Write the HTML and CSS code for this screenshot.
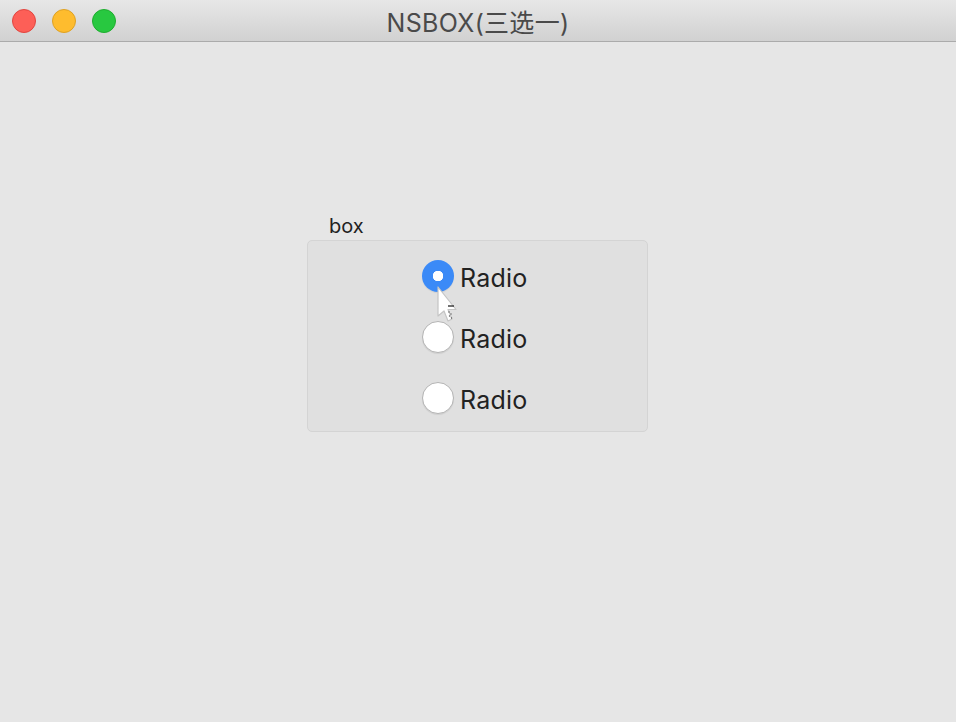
FILE: index.html
```html
<!DOCTYPE html>
<html>
<head>
<meta charset="utf-8">
<link rel="stylesheet" href="styles.css">
</head>
<body>
<div class="window">
  <div class="titlebar">
    <div class="lights">
      <span class="light red"></span>
      <span class="light yellow"></span>
      <span class="light green"></span>
    </div>
    <div class="title">NSBOX(三选一)</div>
  </div>
  <div class="content">
    <div class="group">
      <div class="group-label">box</div>
      <div class="box">
        <div class="radio-row">
          <span class="radio checked"></span><span class="radio-text">Radio</span>
          <svg class="cursor" width="24" height="40" viewBox="0 0 24 40">
            <path d="M1 1 L1 30 L7 25 L11 35 L15 33 L11 23.5 L19 23.5 Z" fill="#ffffff" stroke="#c4c4c4" stroke-width="1.2" stroke-linejoin="round"/>
            <path d="M11 20 L17 20" stroke="#222" stroke-width="1.3"/>
            <circle cx="12" cy="26" r="0.7" fill="#555"/>
            <circle cx="14" cy="28" r="0.7" fill="#555"/>
            <circle cx="12.5" cy="30" r="0.7" fill="#555"/>
            <circle cx="14.5" cy="32" r="0.7" fill="#555"/>
          </svg>
        </div>
        <div class="radio-row">
          <span class="radio"></span><span class="radio-text">Radio</span>
        </div>
        <div class="radio-row">
          <span class="radio"></span><span class="radio-text">Radio</span>
        </div>
      </div>
    </div>
  </div>
</div>
</body>
</html>
```
FILE: styles.css
```css
html, body {
  margin: 0;
  padding: 0;
}
body {
  width: 956px;
  height: 722px;
  overflow: hidden;
  background: #e6e6e6;
  font-family: Inter, "Noto Sans CJK SC", sans-serif;
}
.window {
  display: flex;
  flex-direction: column;
  width: 956px;
  height: 722px;
}
.titlebar {
  position: relative;
  height: 41px;
  flex: none;
  background: linear-gradient(#e7e7e7, #d1d1d1);
  border-bottom: 1px solid #ababab;
  display: flex;
  align-items: center;
  justify-content: center;
}
.lights {
  position: absolute;
  left: 12px;
  top: 9px;
  display: flex;
  gap: 16px;
}
.light {
  width: 24px;
  height: 24px;
  border-radius: 50%;
  box-sizing: border-box;
}
.red { background: #fd5f57; border: 1px solid #e1453f; }
.yellow { background: #febc2e; border: 1px solid #dea123; }
.green { background: #28c840; border: 1px solid #1ead2e; }
.title {
  font-size: 25px;
  color: #4a4a4a;
  letter-spacing: 0.3px;
  padding-top: 1px;
}
.content {
  flex: 1;
  background: #e6e6e6;
}
.group {
  margin-left: 307px;
  margin-top: 171px;
  width: 341px;
}
.group-label {
  font-size: 20px;
  line-height: 26px;
  color: #222;
  padding-left: 22px;
  margin-bottom: 1px;
}
.box {
  box-sizing: border-box;
  width: 341px;
  height: 192px;
  background: #e0e0e0;
  border: 1px solid #d4d4d4;
  border-radius: 5px;
  padding: 19px 0 0 114px;
  display: flex;
  flex-direction: column;
  gap: 29px;
}
.radio-row {
  position: relative;
  display: flex;
  align-items: center;
  height: 32px;
}
.radio {
  box-sizing: border-box;
  width: 32px;
  height: 32px;
  border-radius: 50%;
  background: #ffffff;
  border: 1px solid #b4b4b4;
  box-shadow: 0 1px 1px rgba(0,0,0,0.08);
  flex: none;
}
.radio.checked {
  background: radial-gradient(circle, #ffffff 0 5px, #3b8af7 5.5px);
  border: none;
}
.radio-text {
  font-size: 25px;
  color: #222;
  margin-left: 6px;
  line-height: 32px;
  padding-top: 4px;
  letter-spacing: 0.2px;
}
.cursor {
  position: absolute;
  left: 15px;
  top: 26px;
}
```
